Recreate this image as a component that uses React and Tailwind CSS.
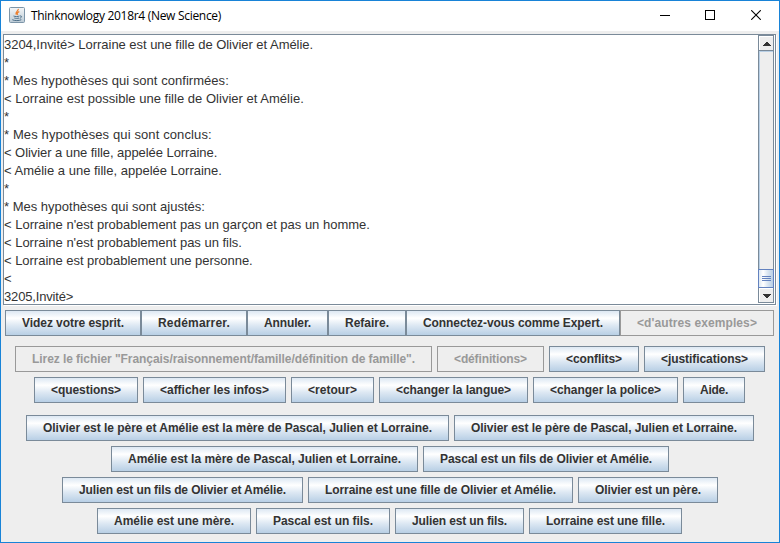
import React, { useLayoutEffect, useRef, useState } from "react";

// Each console line carries a small tracking adjustment, in pixels over the whole line.
const LOG = [
  ["3204,Invité> Lorraine est une fille de Olivier et Amélie.", -2],
  ["*", 0],
  ["* Mes hypothèses qui sont confirmées:", 1.5],
  ["< Lorraine est possible une fille de Olivier et Amélie.", 1],
  ["*", 0],
  ["* Mes hypothèses qui sont conclus:", 4],
  ["< Olivier a une fille, appelée Lorraine.", -2.5],
  ["< Amélie a une fille, appelée Lorraine.", 0],
  ["*", 0],
  ["* Mes hypothèses qui sont ajustés:", 0],
  ["< Lorraine n'est probablement pas un garçon et pas un homme.", -0.5],
  ["< Lorraine n'est probablement pas un fils.", -0.5],
  ["< Lorraine est probablement une personne.", -1],
  ["<", 0],
  ["3205,Invité>", -2],
];

// Tracks a single line of text so that it spans the given width.
function Fit({ width, children }) {
  const ref = useRef(null);
  const [spacing, setSpacing] = useState(0);
  useLayoutEffect(() => {
    const natural = ref.current.getBoundingClientRect().width;
    setSpacing((width - natural) / String(children).length);
  }, []);
  return (
    <span ref={ref} className="whitespace-pre [font-variant-ligatures:none]" style={{ letterSpacing: spacing }}>
      {children}
    </span>
  );
}

function Button({ w, off, children }) {
  return (
    <button
      style={{ width: w }}
      className={
        "flex h-[26px] shrink-0 items-center whitespace-nowrap border pl-4 text-[12px] font-bold leading-[14px] " +
        (off
          ? "border-[#999999] bg-[#eeeeee] text-[#999999]"
          : "border-[#7a8a99] bg-[linear-gradient(180deg,#dde8f3_0%,#ffffff_30%,#dde8f3_60%,#b8cfe5_100%)] text-[#333333]")
      }
    >
      <Fit width={w - 34}>{children}</Fit>
    </button>
  );
}

function ScrollBar() {
  return (
    <div className="mr-px flex h-[268px] w-4 shrink-0 flex-col">
      <div className="flex h-4 border border-[#7a8a99]">
        <div className="flex flex-1 border-l border-t border-white bg-[#eeeeee] pl-[3px] pt-[5px]">
          <svg width="8" height="4" viewBox="0 0 8 4" shapeRendering="crispEdges" fill="#333333">
            <path d="M3 0h2v1h1v1h1v1h1v1H0V3h1V2h1V1h1z" />
          </svg>
        </div>
      </div>
      <div className="flex-1 border-x border-[#7a8a99] bg-[#eeeeee]">
        <div className="h-full border-l border-t border-[#b8cfe5]" />
      </div>
      <div className="flex h-[19px] flex-col items-center gap-px border border-[#6382bf] bg-[linear-gradient(90deg,#dde8f3_0%,#ffffff_30%,#dde8f3_60%,#b8cfe5_100%)] pt-[6px]">
        <i className="h-px w-[9px] bg-[#6382bf]" />
        <i className="h-px w-[9px] bg-[#6382bf]" />
        <i className="h-px w-[9px] bg-[#6382bf]" />
      </div>
      <div className="flex h-[15px] border-x border-b border-[#7a8a99]">
        <div className="flex flex-1 border-l border-t border-white bg-[#eeeeee] pl-[3px] pt-[5px]">
          <svg width="8" height="4" viewBox="0 0 8 4" shapeRendering="crispEdges" fill="#333333">
            <path d="M0 0h8v1H7v1H6v1H5v1H3V3H2V2H1V1H0z" />
          </svg>
        </div>
      </div>
    </div>
  );
}

function JavaIcon() {
  return (
    <svg width="16" height="16" viewBox="0 0 16 16">
      <defs>
        <linearGradient id="tile" x1="0" y1="0" x2="0" y2="1">
          <stop offset="0" stopColor="#f4f6f7" />
          <stop offset="1" stopColor="#bccbd6" />
        </linearGradient>
      </defs>
      <rect x=".5" y=".5" width="15" height="15" rx="1" fill="url(#tile)" stroke="#7d95a8" />
      <path d="M9.300 1.800C9.800 4 5.500 4.800 7.300 7.800M10.300 4.600C8 5.400 7.800 6.500 8.800 7.900" fill="none" stroke="#ee7d2b" strokeWidth="1.200" />
      <path d="M4.500 9c1.500.7 4.500.7 6 0M5.300 11c1.400.5 3.400.5 4.700 0M3.300 12.700c2 1.200 7 1.200 9 0M11 9c2.200-.5 2 1.700-.3 2.300" fill="none" stroke="#4f7089" />
    </svg>
  );
}

export default function App() {
  return (
    <div className="flex h-[543px] w-[780px] flex-col overflow-hidden border border-[#1883d7] bg-[#eeeeee] font-['Liberation_Sans',Arial,sans-serif]">
      <header className="flex h-[30px] shrink-0 items-center bg-white pb-[2px] pl-2">
        <JavaIcon />
        <h1 className="mt-[2px] ml-[6px] font-['Open_Sans','Noto_Sans',sans-serif] text-[12px] leading-4 text-black">
          <Fit width={190}>Thinknowlogy 2018r4 (New Science)</Fit>
        </h1>
        <div className="mr-[19px] ml-auto flex gap-[35px]">
          <svg width="10" height="10" viewBox="0 0 10 10" shapeRendering="crispEdges">
            <rect y="5" width="10" height="1" />
          </svg>
          <svg width="10" height="10" viewBox="0 0 10 10" shapeRendering="crispEdges">
            <rect x=".5" y=".5" width="9" height="9" fill="none" stroke="black" />
          </svg>
          <svg className="ml-px -mr-px" width="10" height="10" viewBox="0 0 10 10">
            <path d="M.2.2l9.600 9.600M9.800.2L.2 9.800" stroke="black" strokeWidth="1.100" />
          </svg>
        </div>
      </header>
      <main className="mt-[3px] ml-[2px] flex h-[271px] w-[773px] shrink-0 border border-[#7a8a99] bg-white shadow-[1px_1px_0_#ffffff]">
        <div className="flex-1 pt-[1px] text-[13px] leading-[18px] text-[#333333]">
          {LOG.map(([text, delta], i) => (
            <p key={i} className="h-[18px] whitespace-pre [font-variant-ligatures:none]" style={{ letterSpacing: delta / text.length }}>
              {text}
            </p>
          ))}
        </div>
        <ScrollBar />
      </main>
      <nav className="mt-[5px] ml-1 flex">
        <Button w={136}>Videz votre esprit.</Button>
        <Button w={106}>Redémarrer.</Button>
        <Button w={81}>Annuler.</Button>
        <Button w={78}>Refaire.</Button>
        <Button w={214}>Connectez-vous comme Expert.</Button>
        <Button w={154} off>{"<d'autres exemples>"}</Button>
      </nav>
      <div className="mt-[10px] ml-[14px] flex gap-[5px]">
        <Button w={417} off>{'Lirez le fichier "Français/raisonnement/famille/définition de famille".'}</Button>
        <Button w={107} off>{"<définitions>"}</Button>
        <Button w={90}>{"<conflits>"}</Button>
        <Button w={121}>{"<justifications>"}</Button>
      </div>
      <div className="mt-[5px] ml-[33px] flex gap-[5px]">
        <Button w={104}>{"<questions>"}</Button>
        <Button w={143}>{"<afficher les infos>"}</Button>
        <Button w={83}>{"<retour>"}</Button>
        <Button w={149}>{"<changer la langue>"}</Button>
        <Button w={145}>{"<changer la police>"}</Button>
        <Button w={62}>Aide.</Button>
      </div>
      <div className="mt-3 ml-[25px] flex gap-[5px]">
        <Button w={423}>Olivier est le père et Amélie est la mère de Pascal, Julien et Lorraine.</Button>
        <Button w={300}>Olivier est le père de Pascal, Julien et Lorraine.</Button>
      </div>
      <div className="mt-[5px] ml-[110px] flex gap-[5px]">
        <Button w={307}>Amélie est la mère de Pascal, Julien et Lorraine.</Button>
        <Button w={246}>Pascal est un fils de Olivier et Amélie.</Button>
      </div>
      <div className="mt-[5px] ml-[61px] flex gap-[5px]">
        <Button w={241}>Julien est un fils de Olivier et Amélie.</Button>
        <Button w={265}>Lorraine est une fille de Olivier et Amélie.</Button>
        <Button w={140}>Olivier est un père.</Button>
      </div>
      <div className="mt-[5px] ml-[96px] flex gap-[5px]">
        <Button w={154}>Amélie est une mère.</Button>
        <Button w={134}>Pascal est un fils.</Button>
        <Button w={129}>Julien est un fils.</Button>
        <Button w={153}>Lorraine est une fille.</Button>
      </div>
    </div>
  );
}
